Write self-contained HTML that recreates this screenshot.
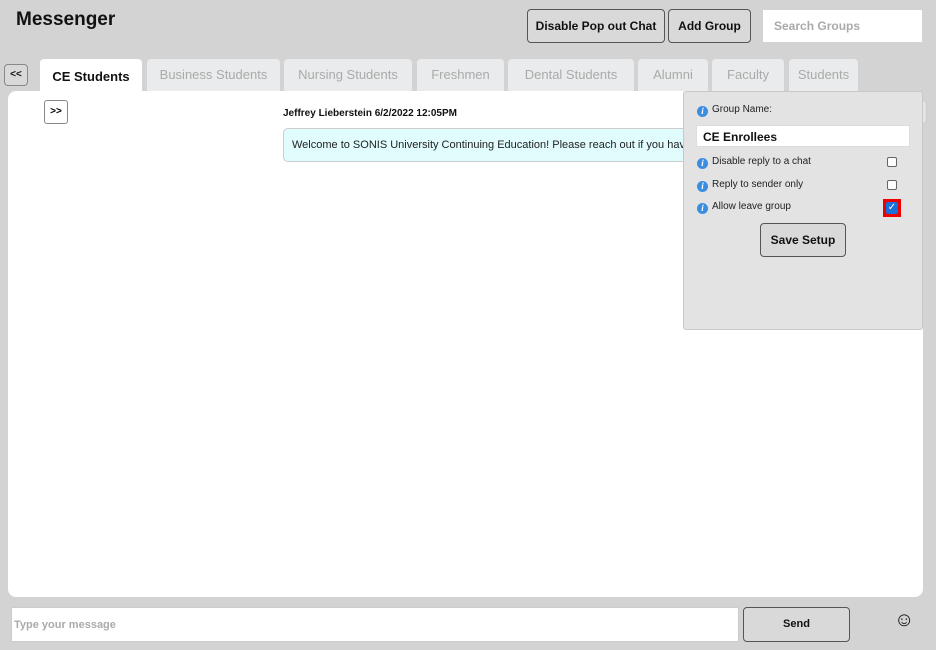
<!DOCTYPE html>
<html><head><style>
*{box-sizing:border-box;margin:0;padding:0}
body{width:936px;height:650px;background:#d3d3d3;font-family:"Liberation Sans",sans-serif;position:relative;overflow:hidden}
.a{position:absolute}
.btn{position:absolute;border:1px solid #555;border-radius:4px;background:#d9d9d9;font-weight:bold;font-size:12px;color:#111;text-align:center}
.tab{position:absolute;top:59px;height:32px;background:#e9ebec;border-radius:4px 4px 0 0;color:#aaa;font-size:13px;padding-top:8px;text-align:center}
.info{display:inline-block;width:11px;height:11px;border-radius:50%;background:#3b8de0;color:#fff;font-size:9px;font-weight:bold;font-style:italic;text-align:center;line-height:11px;font-family:"Liberation Serif",serif;vertical-align:-2px;margin-right:4px}
.lbl{position:absolute;left:697px;font-size:10px;color:#222}
.cb{position:absolute;left:887px;width:10px;height:10px;border:1px solid #666;border-radius:2px;background:#fff}
</style></head><body>
<div class="a" style="left:16px;top:9px;font-size:19px;font-weight:bold;color:#111">Messenger</div>
<div class="btn" style="left:527px;top:9px;width:138px;height:34px;line-height:32px">Disable Pop out Chat</div>
<div class="btn" style="left:668px;top:9px;width:83px;height:34px;line-height:32px">Add Group</div>
<div class="a" style="left:763px;top:10px;width:159px;height:32px;background:#fff;color:#aaa;font-size:12px;font-weight:bold;padding:9px 11px">Search Groups</div>
<div class="btn" style="left:4px;top:64px;width:24px;height:22px;line-height:20px;font-size:10px;border-color:#888;font-weight:bold">&lt;&lt;</div>
<div class="a" style="left:8px;top:91px;width:915px;height:506px;background:#fff;border-radius:8px"></div>
<div class="tab" style="left:40px;width:102px;background:#fff;color:#111;font-weight:bold;font-size:13px;padding-top:10px">CE Students</div>
<div class="tab" style="left:147px;width:133px">Business Students</div>
<div class="tab" style="left:284px;width:128px">Nursing Students</div>
<div class="tab" style="left:417px;width:87px">Freshmen</div>
<div class="tab" style="left:508px;width:126px">Dental Students</div>
<div class="tab" style="left:638px;width:70px">Alumni</div>
<div class="tab" style="left:712px;width:72px">Faculty</div>
<div class="tab" style="left:789px;width:69px">Students</div>
<div class="a" style="left:44px;top:100px;width:24px;height:24px;border:1px solid #888;border-radius:3px;background:#fff;font-size:10px;font-weight:bold;text-align:center;line-height:22px">&gt;&gt;</div>
<div class="a" style="left:283px;top:108px;font-size:10px;font-weight:bold;color:#111">Jeffrey Lieberstein 6/2/2022 12:05PM</div>
<div class="a" style="left:283px;top:128px;width:440px;height:34px;background:#e0fcfc;border:1px solid #ccc;border-radius:5px;font-size:11px;color:#222;padding:10px 8px;white-space:nowrap;overflow:hidden">Welcome to SONIS University Continuing Education! Please reach out if you have any questions.</div>
<div class="a" style="left:900px;top:100px;width:27px;height:24px;border:1px solid #ccc;border-radius:4px;background:#e3e3e3"></div>
<div class="a" style="left:683px;top:91px;width:240px;height:239px;background:#e3e3e3;border:1px solid #c8c8c8;border-radius:3px"></div>
<div class="lbl" style="top:104px"><span class="info">i</span>Group Name:</div>
<div class="a" style="left:696px;top:125px;width:214px;height:22px;background:#fff;border:1px solid #ddd;font-size:12px;font-weight:bold;color:#111;padding:4px 6px">CE Enrollees</div>
<div class="lbl" style="top:156px"><span class="info">i</span>Disable reply to a chat</div>
<div class="lbl" style="top:179px"><span class="info">i</span>Reply to sender only</div>
<div class="lbl" style="top:201px"><span class="info">i</span>Allow leave group</div>
<div class="cb" style="top:157px"></div>
<div class="cb" style="top:180px"></div>
<div class="a" style="left:883px;top:199px;width:18px;height:18px;background:#e00;padding:3px"><div style="width:12px;height:12px;background:#1a6fd8;border-radius:2px;color:#fff;font-size:10px;line-height:12px;text-align:center">✓</div></div>
<div class="btn" style="left:760px;top:223px;width:86px;height:34px;line-height:32px">Save Setup</div>
<div class="a" style="left:11px;top:607px;width:728px;height:35px;background:#fff;border:1px solid #ccc;font-size:11px;font-weight:bold;color:#aaa;padding:11px 2px">Type your message</div>
<div class="btn" style="left:743px;top:607px;width:107px;height:35px;line-height:33px;font-size:11px">Send</div>
<div class="a" style="left:894px;top:609px;font-size:20px;color:#111">☺</div>
</body></html>
